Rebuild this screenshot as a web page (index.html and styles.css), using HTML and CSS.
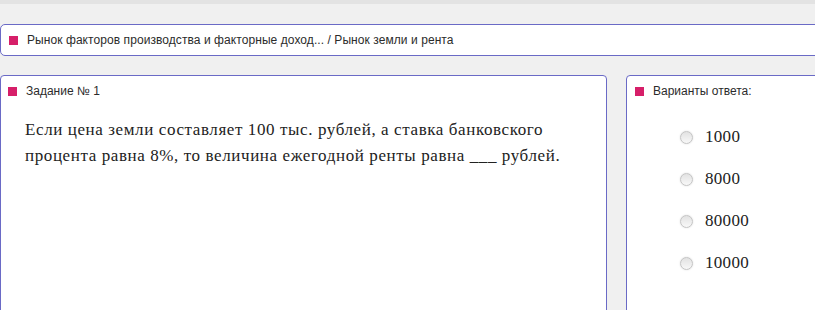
FILE: index.html
```html
<!DOCTYPE html>
<html lang="ru">
<head>
    <meta charset="UTF-8">
    <title>Задание № 1</title>
    <link rel="stylesheet" href="styles.css">
</head>
<body>
    <div class="topbar"></div>

    <div class="crumbs">
        <span class="marker"></span>
        <span class="crumbs-text">Рынок факторов производства и факторные доход... / Рынок земли и рента</span>
    </div>

    <div class="main">
        <div class="panel task">
            <div class="panel-title">
                <span class="marker"></span>
                <span>Задание № 1</span>
            </div>
            <p class="question">Если цена земли составляет 100 тыс. рублей, а ставка банковского процента равна 8%, то величина ежегодной ренты равна ___ рублей.</p>
        </div>

        <div class="panel answers">
            <div class="panel-title">
                <span class="marker"></span>
                <span>Варианты ответа:</span>
            </div>
            <div class="options">
                <label class="option"><input type="radio" name="a1" value="1"> 1000</label>
                <label class="option"><input type="radio" name="a1" value="2"> 8000</label>
                <label class="option"><input type="radio" name="a1" value="3"> 80000</label>
                <label class="option"><input type="radio" name="a1" value="4"> 10000</label>
            </div>
        </div>
    </div>
</body>
</html>
```

FILE: styles.css
```css
body {
    margin: 0;
    height: 310px;
    background-color: #f0f0f0;
    font-family: "Liberation Sans", Arial, sans-serif;
    color: #2b2b2b;
    overflow: hidden;
}
.topbar {
    height: 4px;
    background-color: #e3e3e3;
}
.marker {
    display: inline-block;
    width: 9px;
    height: 9px;
    background-color: #d61f69;
    margin-right: 9px;
}
.crumbs {
    display: flex;
    align-items: center;
    margin: 20px -20px 0 0;
    height: 30px;
    padding-left: 8px;
    background-color: #fff;
    border: 1px solid #6a6ac6;
    border-radius: 5px;
    font-size: 12px;
    letter-spacing: 0.07px;
}
.main {
    display: flex;
    gap: 19px;
    margin-top: 19px;
    margin-right: -20px;
}
.panel {
    background-color: #fff;
    border: 1px solid #6a6ac6;
    border-radius: 4px;
    min-height: 300px;
}
.task {
    width: 605px;
}
.answers {
    flex: 1;
}
.panel-title {
    display: flex;
    align-items: center;
    padding: 8px 0 0 7px;
    font-size: 12px;
    height: 14px;
}
.answers .panel-title {
    padding-left: 8px;
}
.question {
    margin: 19px 0 0 24px;
    width: 560px;
    font-family: "Liberation Serif", "Times New Roman", serif;
    font-size: 17px;
    letter-spacing: 0.6px;
    line-height: 26px;
    color: #222;
}
.options {
    display: flex;
    flex-direction: column;
    gap: 20px;
    padding: 28px 0 0 53px;
}
.option {
    display: flex;
    align-items: center;
    height: 22px;
    font-family: "Liberation Serif", "Times New Roman", serif;
    font-size: 17px;
    letter-spacing: 0.3px;
    color: #222;
}
.option input {
    appearance: none;
    width: 13px;
    height: 13px;
    margin: 0 12px 0 0;
    border: 1px solid #c4c4c4;
    border-radius: 50%;
    background: linear-gradient(#e2e2e2, #f8f8f8);
    box-shadow: 0 0 2px #ddd;
}
```
